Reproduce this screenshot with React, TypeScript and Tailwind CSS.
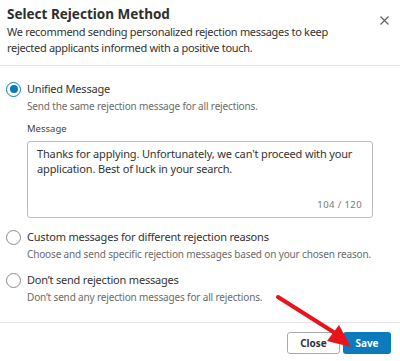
import React, { useState } from "react";

interface Option {
  id: string;
  label: string;
  hint: string;
}

const options: Option[] = [
  {
    id: "unified",
    label: "Unified Message",
    hint: "Send the same rejection message for all rejections.",
  },
  {
    id: "custom",
    label: "Custom messages for different rejection reasons",
    hint: "Choose and send specific rejection messages based on your chosen reason.",
  },
  {
    id: "none",
    label: "Don’t send rejection messages",
    hint: "Don’t send any rejection messages for all rejections.",
  },
];

const Radio: React.FC<{ checked: boolean }> = ({ checked }) => (
  <span
    className={
      checked
        ? "flex h-[15px] w-[15px] shrink-0 items-center justify-center rounded-full border-[1.5px] border-[#0a78be]"
        : "flex h-[15px] w-[15px] shrink-0 items-center justify-center rounded-full border border-[#8a8a8a]"
    }
  >
    {checked && <span className="h-[8px] w-[8px] rounded-full bg-[#0a78be]" />}
  </span>
);

const App: React.FC = () => {
  const [selected, setSelected] = useState<string>("unified");
  const message =
    "Thanks for applying. Unfortunately, we can't proceed with your application. Best of luck in your search.";

  return (
    <div className="relative flex h-[361px] w-[400px] flex-col overflow-hidden bg-white text-[#333] font-['Noto_Sans',sans-serif]">
      {/* header */}
      <div className="flex items-start justify-between border-b border-[#e6e6e6] pl-[7px] pr-[11px] pt-[4px] pb-[9px]">
        <div>
          <h2 className="text-[13.5px] font-bold leading-[20px] text-[#2e2e2e]">Select Rejection Method</h2>
          <p className="text-[11px] leading-[16px] tracking-[-0.3px] text-[#333]">
            We recommend sending personalized rejection messages to keep
            <br />
            rejected applicants informed with a positive touch.
          </p>
        </div>
        <button className="mt-[12px] text-[#666]">
          <svg width="9" height="9" viewBox="0 0 9 9" stroke="currentColor" strokeWidth="1.3">
            <path d="M0.5 0.5L8.5 8.5M8.5 0.5L0.5 8.5" />
          </svg>
        </button>
      </div>

      {/* options */}
      <div className="flex flex-1 flex-col gap-[10px] pl-[6px] pr-[27px] pt-[15px]">
        {options.map((opt) => (
          <div key={opt.id} onClick={() => setSelected(opt.id)} className="cursor-pointer">
            <div className="flex items-center gap-[6px]">
              <Radio checked={selected === opt.id} />
              <span className="text-[11px] leading-[16px] tracking-[-0.2px] text-[#333]">{opt.label}</span>
            </div>
            <div className="mt-[1px] pl-[21px] text-[10px] leading-[16px] tracking-[-0.15px] text-[#6b6b6b]">
              {opt.hint}
            </div>
            {opt.id === "unified" && selected === "unified" && (
              <div className="pl-[21px] pt-[8px] pb-[1px]">
                <div className="text-[9.5px] leading-[14px] text-[#444]">Message</div>
                <div className="mt-[5px] flex h-[77px] flex-col justify-between rounded-[3px] border border-[#bdbdbd] pl-[9px] pr-[8px] pt-[4px] pb-[5px]">
                  <p className="text-[11px] leading-[15px] tracking-[-0.15px] text-[#333]">{message}</p>
                  <div className="pr-[2px] text-right text-[9.5px] leading-[14px] tracking-[0.4px] text-[#777]">
                    {message.length} / 120
                  </div>
                </div>
              </div>
            )}
          </div>
        ))}
      </div>

      {/* footer */}
      <div className="flex justify-end gap-[3px] border-t border-[#e6e6e6] pt-[9px] pb-[7px] pr-[9px]">
        <button className="h-[22px] w-[53px] rounded-[3px] border border-[#aaa] bg-white text-[10px] font-bold text-[#333]">
          Close
        </button>
        <button className="h-[22px] w-[48px] rounded-[3px] bg-[#0b7bbd] text-[10px] font-bold text-white">
          Save
        </button>
      </div>

      {/* annotation arrow */}
      <svg className="pointer-events-none absolute left-0 top-0" width="400" height="361">
        <line x1="278" y1="297" x2="335" y2="333" stroke="#e8141b" strokeWidth="4" strokeLinecap="round" />
        <polygon points="351,347 327,341 339,325" fill="#e8141b" />
      </svg>
    </div>
  );
};

export default App;
